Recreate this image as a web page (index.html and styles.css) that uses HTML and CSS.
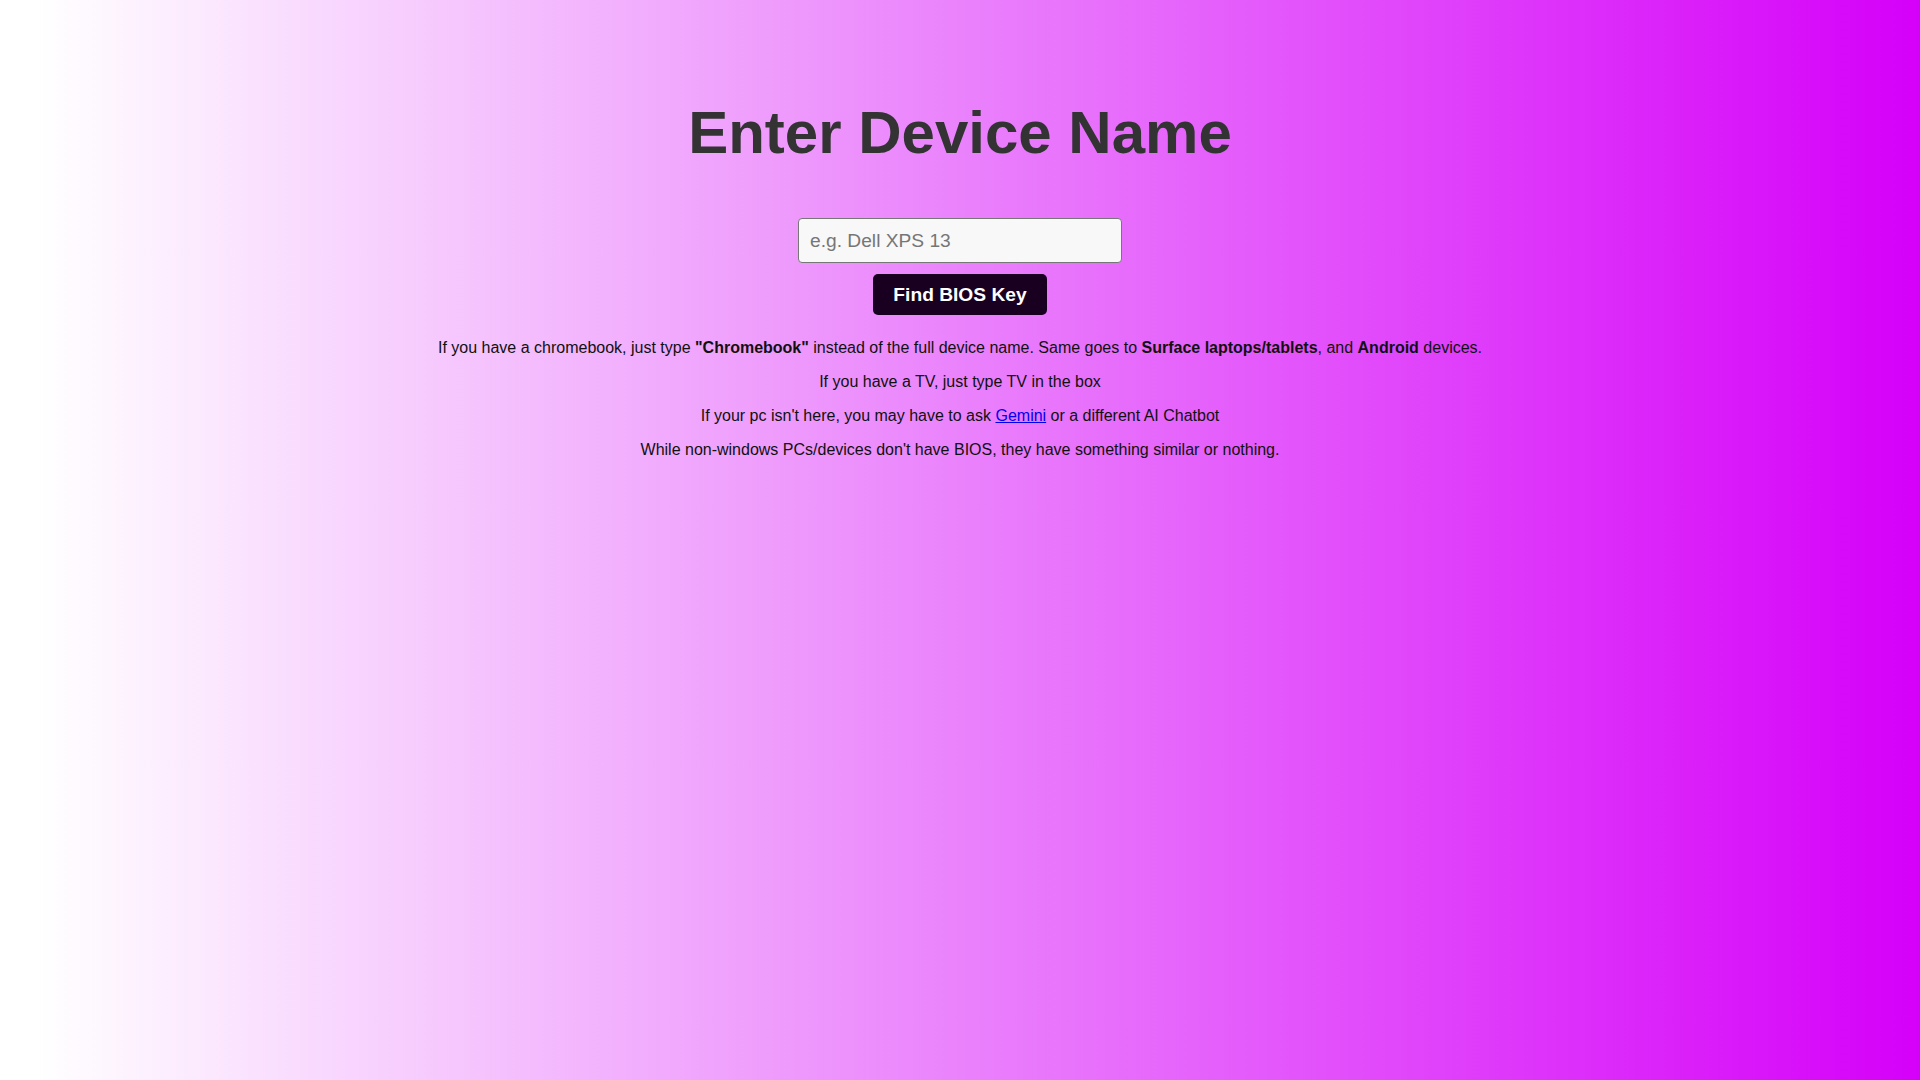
FILE: index.html
```html
<!DOCTYPE html>
<html lang="en">
<head>
<meta charset="utf-8">
<title>Enter Device Name</title>
<link rel="stylesheet" href="styles.css">
</head>
<body>
<main class="page">
  <h1 class="title">Enter Device Name</h1>
  <div class="search">
    <input class="device-input" type="text" placeholder="e.g. Dell XPS 13">
    <button class="find-btn" type="button">Find BIOS Key</button>
  </div>
  <div class="info">
    <p>If you have a chromebook, just type <strong>"Chromebook"</strong> instead of the full device name. Same goes to <strong>Surface laptops/tablets</strong>, and <strong>Android</strong> devices.</p>
    <p>If you have a TV, just type TV in the box</p>
    <p>If your pc isn't here, you may have to ask <a href="#">Gemini</a> or a different AI Chatbot</p>
    <p>While non-windows PCs/devices don't have BIOS, they have something similar or nothing.</p>
  </div>
</main>
</body>
</html>
```

FILE: styles.css
```css
html, body {
  margin: 0;
  padding: 0;
  height: 100%;
}

body {
  font-family: "Liberation Sans", Arial, sans-serif;
  background: linear-gradient(to right, #ffffff 2%, #d500f9 100%);
  color: #111;
}

.page {
  text-align: center;
  padding-top: 1px;
}

.title {
  font-size: 60px;
  font-weight: bold;
  color: #333;
  margin: 97px 0 51px;
  line-height: normal;
}

.search {
  display: flex;
  flex-direction: column;
  align-items: center;
  gap: 11px;
  margin-bottom: 24px;
}

.device-input {
  box-sizing: border-box;
  width: 324px;
  height: 45px;
  padding: 0 11px;
  font-family: "Liberation Sans", Arial, sans-serif;
  font-size: 19.2px;
  color: #222;
  background: #f8f8f8;
  border: 1px solid #777;
  border-radius: 4px;
  outline: none;
}

.device-input::placeholder {
  color: #767676;
}

.find-btn {
  box-sizing: border-box;
  height: 41px;
  padding: 0 20px;
  font-family: "Liberation Sans", Arial, sans-serif;
  font-size: 19.2px;
  font-weight: bold;
  color: #fff;
  background: #1a0020;
  border: none;
  border-radius: 5px;
  cursor: pointer;
}

.info p {
  font-size: 16px;
  margin: 16px 0;
}

.info a {
  color: #0000ee;
}
```
